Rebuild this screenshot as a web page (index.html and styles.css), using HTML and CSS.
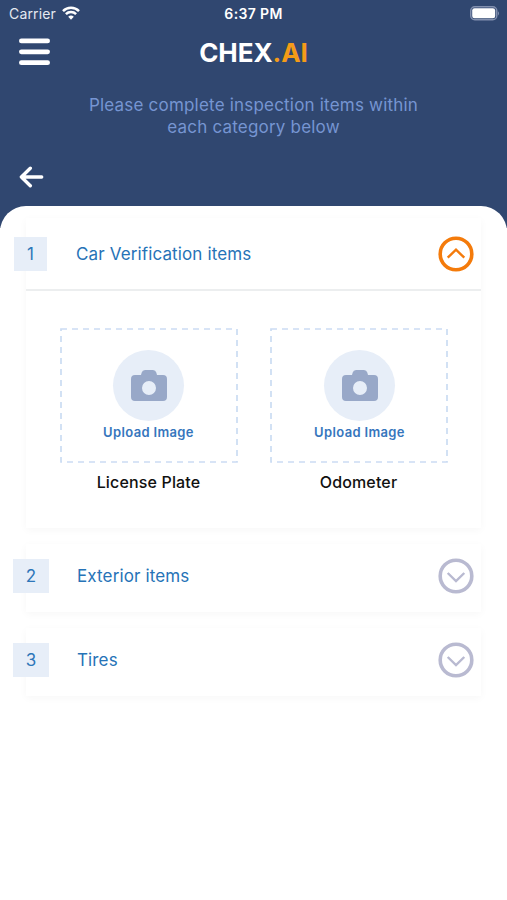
FILE: index.html
```html
<!DOCTYPE html>
<html lang="en">
<head>
<meta charset="utf-8">
<title>CHEX.AI</title>
<link rel="stylesheet" href="styles.css">
</head>
<body>
<header class="header">
  <div class="status">
    <div class="carrier"><span class="carrier-name">Carrier</span>
      <svg class="wifi" width="18" height="14" viewBox="0 0 18 14" fill="none" stroke="#fff" stroke-width="2.5"><path d="M1 5.1a11.3 11.3 0 0 1 16 0M3.9 8.2a7.2 7.2 0 0 1 10.2 0"/><path d="M9 13.7 6.2 10.8a4 4 0 0 1 5.6 0Z" fill="#fff" stroke="none"/></svg>
    </div>
    <time class="clock">6:37 PM</time>
    <svg class="battery" width="30" height="15" viewBox="0 0 30 15"><rect x=".75" y=".75" width="26" height="13" rx="4" fill="none" stroke="#8290af" stroke-width="1.5"/><rect x="2.2" y="2.3" width="23" height="10" rx="2.3" fill="#fff"/><path d="M28 5.2q2 2 0 4.4Z" fill="#8290af"/></svg>
  </div>
  <div class="brand-row">
    <svg class="menu" width="31" height="28" viewBox="0 0 31 28" stroke="#fff" stroke-width="4.8" stroke-linecap="round"><path d="M2.4 2.9h26.2M2.4 13.8h26.2M2.4 24.7h26.2"/></svg>
    <h1 class="brand">CHEX<span class="brand-accent">.AI</span></h1>
  </div>
  <p class="intro">Please complete inspection items within<br>each category below</p>
  <svg class="back" width="25" height="22" viewBox="0 0 25 22" fill="none" stroke="#fff" stroke-width="3.4" stroke-linecap="round" stroke-linejoin="round"><path d="M22.7 11H2.4M11.3 2.3 2.4 11l8.9 8.7"/></svg>
</header>
<main class="panel">
  <section class="card card-open">
    <div class="row">
      <span class="number">1</span>
      <h2 class="title">Car Verification items</h2>
      <svg class="toggle" width="36" height="36" viewBox="0 0 36 36" fill="none" stroke="#f47b0b"><circle cx="18" cy="18" r="15.8" stroke-width="3.6"/><path d="m9.7 21.7 8.3-8 8.3 8" stroke-width="2.4"/></svg>
    </div>
    <div class="uploads">
      <figure class="upload">
        <div class="drop">
          <svg class="outline" width="178" height="135"><rect x="1" y="1" width="176" height="133"/></svg>
          <span class="camera"><svg width="36" height="32" viewBox="0 0 36 32"><path fill="#98a8c8" fill-rule="evenodd" d="M4 5h6l.7-2.4Q11.4 0 14 0h8q2.6 0 3.3 2.6L26 5h6q4 0 4 4v18q0 4-4 4H4q-4 0-4-4V9q0-4 4-4Zm14 6a7 7 0 1 0 0 14 7 7 0 0 0 0-14Z"/></svg></span>
          <span class="action">Upload Image</span>
        </div>
        <figcaption class="caption">License Plate</figcaption>
      </figure>
      <figure class="upload upload-odometer">
        <div class="drop">
          <svg class="outline" width="178" height="135"><rect x="1" y="1" width="176" height="133"/></svg>
          <span class="camera"><svg width="36" height="32" viewBox="0 0 36 32"><path fill="#98a8c8" fill-rule="evenodd" d="M4 5h6l.7-2.4Q11.4 0 14 0h8q2.6 0 3.3 2.6L26 5h6q4 0 4 4v18q0 4-4 4H4q-4 0-4-4V9q0-4 4-4Zm14 6a7 7 0 1 0 0 14 7 7 0 0 0 0-14Z"/></svg></span>
          <span class="action">Upload Image</span>
        </div>
        <figcaption class="caption">Odometer</figcaption>
      </figure>
    </div>
  </section>
  <section class="card card-closed">
    <div class="row">
      <span class="number">2</span>
      <h2 class="title">Exterior items</h2>
      <svg class="toggle" width="36" height="36" viewBox="0 0 36 36" fill="none" stroke="#b9bad1"><circle cx="18" cy="18" r="15.8" stroke-width="3.6"/><path d="m9.7 15 8.3 8 8.3-8" stroke-width="2.4"/></svg>
    </div>
  </section>
  <section class="card card-closed">
    <div class="row">
      <span class="number">3</span>
      <h2 class="title">Tires</h2>
      <svg class="toggle" width="36" height="36" viewBox="0 0 36 36" fill="none" stroke="#b9bad1"><circle cx="18" cy="18" r="15.8" stroke-width="3.6"/><path d="m9.7 15 8.3 8 8.3-8" stroke-width="2.4"/></svg>
    </div>
  </section>
</main>
</body>
</html>
```
FILE: styles.css
```css
* { box-sizing: border-box; margin: 0; padding: 0; }
body { background: #fff; font-family: Inter, "Liberation Sans", sans-serif; width: 507px; height: 900px; overflow: hidden; }
svg { display: block; flex: none; }
.header { height: 228px; background: #304770; color: #fff; }
.status { display: grid; grid-template-columns: 1fr auto 1fr; height: 28px; padding: 0 7px 0 9px; align-items: center; }
.carrier { display: flex; align-items: center; gap: 6px; margin-top: -1px; font-size: 14px; color: #e5e9f0; }
.carrier-name { letter-spacing: .15px; }
.wifi { margin-top: -1px; }
.clock { margin: -2px 0 0 -2px; font-size: 14px; font-weight: 600; letter-spacing: .35px; }
.battery { justify-self: end; margin-top: -1px; }
.brand-row { display: grid; grid-template-columns: 31px 1fr 31px; padding: 0 19px; height: 50px; align-items: center; }
.brand { text-align: center; font-size: 26px; line-height: 30px; font-weight: 700; letter-spacing: -.05px; }
.menu { margin-top: -2px; }
.brand-accent { color: #f49b17; }
.intro { margin-top: 16px; text-align: center; font-size: 17px; line-height: 22px; color: #7695d2; letter-spacing: .2px; }
.back { margin: 28px 0 0 19px; }
.panel { min-height: 694px; margin-top: -22px; border-radius: 26px 26px 0 0; background: #fff; padding: 12px 26px 0; }
.card { width: 455px; background: #fff; box-shadow: 0 2px 8px rgba(0, 0, 0, .035); margin-bottom: 16px; }
.card-open { height: 310px; }
.card-closed { height: 68px; }
.row { display: flex; align-items: center; height: 64px; margin-left: -13px; padding-right: 7px; }
.card-open .row { height: 73px; margin-left: -12px; padding-right: 8px; border-bottom: 2px solid; border-image: linear-gradient(to right, transparent 13px, #eceeef 13px, #eceeef 466px, transparent 466px) 1; }
.number { width: 36px; height: 34px; display: grid; place-items: center; background: #e7eef8; color: #2e76b9; font-size: 17px; }
.card-open .number { width: 33px; }
.title { flex: 1; margin-left: 28px; color: #2673b7; font-size: 17px; line-height: 24px; font-weight: 400; letter-spacing: .13px; }
.card-open .title { margin-left: 29px; }
.card-open .toggle { margin-right: -.5px; }
.uploads { display: flex; gap: 32px; padding: 37px 34px 0; }
.upload { width: 178px; flex: none; }
.drop { position: relative; height: 135px; display: flex; flex-direction: column; align-items: center; padding: 22px 1px 0 0; }
.upload-odometer .drop { padding-right: 0; padding-left: 1px; }
.outline { position: absolute; inset: 0; fill: none; stroke: #cbdcf3; stroke-width: 1.7; stroke-dasharray: 6 5; }
.camera { width: 71px; height: 71px; display: grid; place-items: center; border-radius: 50%; background: #e7eef8; }
.action { margin-top: 2px; color: #3676bd; font-size: 13px; line-height: 18px; font-weight: 600; letter-spacing: .35px; }
.caption { margin: 8px 1px 0 0; text-align: center; font-size: 16px; line-height: 22px; font-weight: 500; letter-spacing: .15px; color: #111; }
```
